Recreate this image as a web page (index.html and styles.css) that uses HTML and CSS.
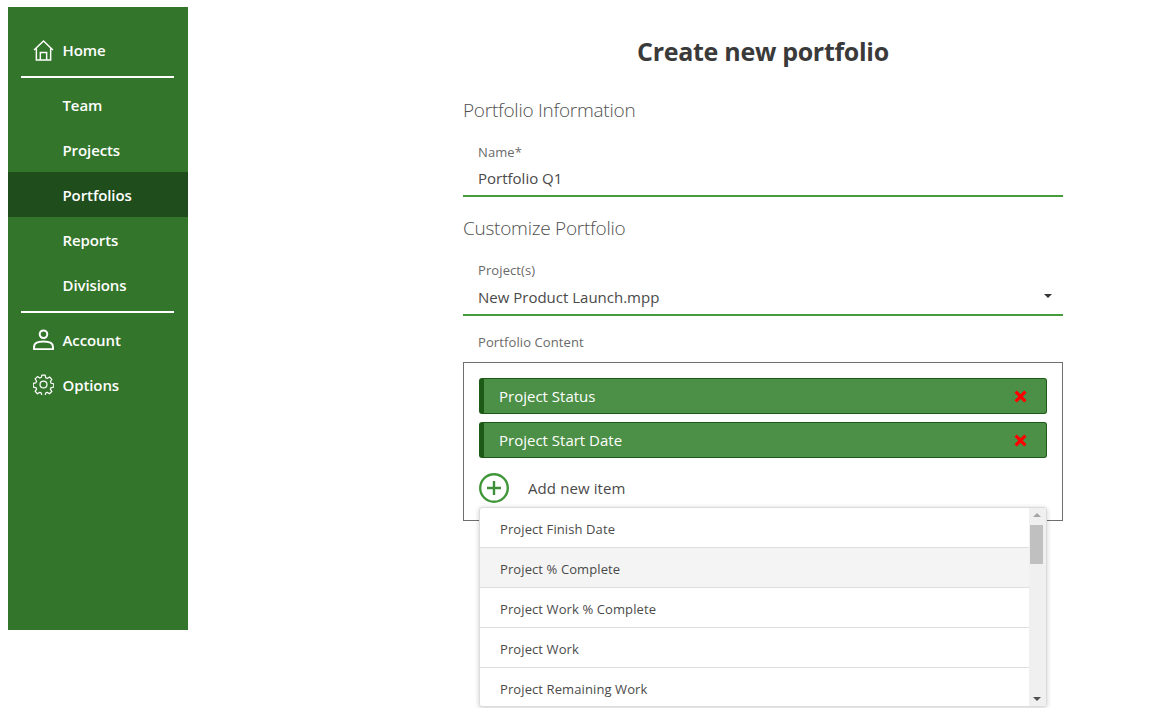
FILE: index.html
```html
<!DOCTYPE html>
<html lang="en">
<head>
<meta charset="utf-8">
<title>Create new portfolio</title>
<link rel="stylesheet" href="styles.css">
</head>
<body>
<nav class="sidebar">
  <a class="nav-item nav-first">
    <svg class="nav-icon" viewBox="0 0 20 20"><path d="M1 9.5 10 1l9 8.5M3.2 8v11h13.6V8M7 19v-7h6v7" fill="none" stroke="#fff" stroke-width="1.4"/></svg>
    <span>Home</span>
  </a>
  <div class="nav-rule"></div>
  <a class="nav-item nav-sub">Team</a>
  <a class="nav-item nav-sub">Projects</a>
  <a class="nav-item nav-sub nav-active">Portfolios</a>
  <a class="nav-item nav-sub">Reports</a>
  <a class="nav-item nav-sub">Divisions</a>
  <div class="nav-rule nav-rule-low"></div>
  <a class="nav-item nav-lift">
    <svg class="nav-icon" viewBox="0 0 20 20"><circle cx="10" cy="5" r="3.6" fill="none" stroke="#fff" stroke-width="1.9"/><path d="M1 19.2v-2.4C1 13.6 4 12 10 12s9 1.6 9 4.8v2.4z" fill="none" stroke="#fff" stroke-width="1.9" stroke-linejoin="round"/></svg>
    <span>Account</span>
  </a>
  <a class="nav-item nav-lift">
    <svg class="nav-icon" viewBox="0 0 20 20"><circle cx="10" cy="10" r="3.3" fill="none" stroke="#fff" stroke-width="1.2"/><path d="M8.4 .8h3.2l.5 2.6 1.5.7 2.3-1.4 2.2 2.3-1.4 2.2.7 1.6 2.6.5v3.2l-2.6.5-.7 1.5 1.4 2.3-2.3 2.2-2.2-1.4-1.5.7-.5 2.6H8.4l-.5-2.6-1.5-.7-2.3 1.4-2.2-2.3 1.4-2.2-.7-1.5-2.6-.5V8.9l2.6-.5.7-1.6L1.9 4.6 4.1 2.3l2.3 1.4 1.5-.7z" transform="translate(.2 .2) scale(.98)" fill="none" stroke="#fff" stroke-width="1.2" stroke-linejoin="round"/></svg>
    <span>Options</span>
  </a>
</nav>
<main class="main">
  <h1 class="title">Create new portfolio</h1>
  <h2 class="section">Portfolio Information</h2>
  <div class="field">
    <div class="field-label">Name*</div>
    <div class="field-value">Portfolio Q1</div>
  </div>
  <h2 class="section section-2">Customize Portfolio</h2>
  <div class="field field-select">
    <div class="field-label">Project(s)</div>
    <div class="field-value">New Product Launch.mpp<span class="caret"></span></div>
  </div>
  <div class="content-label">Portfolio Content</div>
  <div class="content-box">
    <div class="chip"><span>Project Status</span><svg class="chip-x" viewBox="0 0 12 12"><path d="M1.5 1.5l9 9M10.5 1.5l-9 9" stroke="#f00" stroke-width="3"/></svg></div>
    <div class="chip"><span>Project Start Date</span><svg class="chip-x" viewBox="0 0 12 12"><path d="M1.5 1.5l9 9M10.5 1.5l-9 9" stroke="#f00" stroke-width="3"/></svg></div>
    <div class="add-row">
      <svg class="add-icon" viewBox="0 0 30 30"><circle cx="15" cy="15" r="13.8" fill="none" stroke="#40973a" stroke-width="2.4"/><path d="M15 8v14M8 15h14" stroke="#3f8f3a" stroke-width="2.4"/></svg>
      <span>Add new item</span>
    </div>
    <div class="dropdown">
      <ul class="options">
        <li>Project Finish Date</li>
        <li class="hover">Project % Complete</li>
        <li>Project Work % Complete</li>
        <li>Project Work</li>
        <li>Project Remaining Work</li>
      </ul>
      <div class="scrollbar">
        <span class="arrow-up"></span>
        <span class="thumb"></span>
        <span class="arrow-down"></span>
      </div>
    </div>
  </div>
  <div class="peek-row">
    <span class="peek-cell peek-a"></span>
    <span class="peek-cell peek-b"></span>
    <span class="peek-cell peek-c"></span>
  </div>
</main>
</body>
</html>
```
FILE: styles.css
```css
* { box-sizing: border-box; }
html, body { height: 100%; overflow: hidden; }
body {
  margin: 0;
  padding: 7px 0 0 8px;
  display: flex;
  align-items: flex-start;
  background: #fff;
  color: #3c3c3c;
  font-family: "Open Sans", "Noto Sans", sans-serif;
}
.sidebar {
  width: 180px;
  height: 623px;
  flex: none;
  background: #33752b;
  padding-top: 21px;
  display: flex;
  flex-direction: column;
}
.nav-item {
  height: 45px;
  display: flex;
  align-items: center;
  gap: 9px;
  padding-left: 54.5px;
  color: #fff;
  font-size: 15px;
  font-weight: 600;
  letter-spacing: -.1px;
}
.nav-lift { padding-bottom: 2px; }
.nav-first { height: 44px; }
.nav-item .nav-icon { margin-left: -30px; width: 21px; height: 21px; flex: none; }
.nav-active { background: #1f4d1c; }
.nav-rule {
  height: 2px;
  margin: 4px 14px 4px 13px;
  background: #fff;
  flex: none;
}
.nav-rule-low { margin: 4px 14px 5px 13px; }
.main {
  width: 600px;
  margin-left: 275px;
  flex: none;
  display: flex;
  flex-direction: column;
}
.title {
  margin: 27px 0 0;
  text-align: center;
  font-size: 25px;
  line-height: 34px;
  font-weight: 700;
  letter-spacing: -.3px;
  color: #3a3a3a;
}
.section {
  margin: 29px 0 0;
  font-size: 19px;
  line-height: 26px;
  font-weight: 300;
  letter-spacing: -.25px;
  color: #505050;
}
.section-2 { margin-top: 18px; }
.field {
  margin-top: 21px;
  padding: 0 15px;
  height: 53px;
  border-bottom: 2px solid #459c3a;
  position: relative;
}
.field-select { margin-top: 21px; height: 54px; }
.field-label {
  font-size: 13px;
  line-height: 17px;
  letter-spacing: .1px;
  color: #6a6a6a;
}
.field-value {
  margin-top: 7px;
  font-size: 15px;
  line-height: 20px;
  color: #4a4a4a;
}
.field-select .field-value { margin-top: 8px; }
.caret {
  position: absolute;
  right: 11px;
  bottom: 16px;
  border: 4px solid transparent;
  border-top-color: #333;
  border-bottom: 0;
}
.content-label {
  margin: 18px 0 0 15px;
  font-size: 13px;
  line-height: 17px;
  letter-spacing: .1px;
  color: #6a6a6a;
}
.content-box {
  margin-top: 11px;
  height: 159px;
  border: 1px solid #6f6f6f;
  padding: 15px;
  position: relative;
}
.chip {
  height: 36px;
  margin-bottom: 8px;
  background: #4c8f46;
  border: 1px solid #1d5a18;
  border-left-width: 5px;
  border-radius: 3px;
  padding: 0 19.5px 0 15px;
  display: flex;
  align-items: center;
  justify-content: space-between;
  color: #fff;
  font-size: 15px;
}
.chip-x { width: 13px; height: 13px; flex: none; }
.add-row {
  margin-top: 15px;
  display: flex;
  align-items: center;
  gap: 19px;
  font-size: 15px;
  letter-spacing: .1px;
  color: #4a4a4a;
}
.add-icon { width: 30px; height: 30px; flex: none; }
.dropdown {
  position: absolute;
  z-index: 2;
  left: 15px;
  top: 144px;
  width: 568px;
  height: 200px;
  background: #fff;
  border: 1px solid #dcdcdc;
  border-radius: 3px;
  box-shadow: 0 1px 5px rgba(0,0,0,.2);
  display: flex;
  overflow: hidden;
}
.options {
  list-style: none;
  margin: 0;
  padding: 0;
  flex: 1;
}
.options li {
  height: 40px;
  padding: 2px 20px 0;
  display: flex;
  align-items: center;
  border-bottom: 1px solid #dedede;
  font-size: 13px;
  letter-spacing: .1px;
  color: #4a4a4a;
}
.options li:last-child { border-bottom: 0; }
.options .hover { background: #f4f4f4; }
.scrollbar {
  width: 17px;
  flex: none;
  background: #f0f0f0;
  position: relative;
}
.thumb {
  position: absolute;
  left: 1px;
  top: 17px;
  width: 13px;
  height: 39px;
  background: #c0c0c0;
}
.arrow-up, .arrow-down {
  position: absolute;
  left: 4px;
  border: 4px solid transparent;
}
.arrow-up { top: 5px; border-bottom-color: #a6a6a6; border-top: 0; }
.arrow-down { bottom: 5px; border-top-color: #505050; border-bottom: 0; }
.peek-row {
  margin-top: 165px;
  height: 20px;
  display: flex;
  flex: none;
}
.peek-cell { border-right: 1px solid #9a9a9a; height: 20px; }
.peek-a { width: 207px; }
.peek-b { width: 310px; }
.peek-c { width: 9px; }
```
